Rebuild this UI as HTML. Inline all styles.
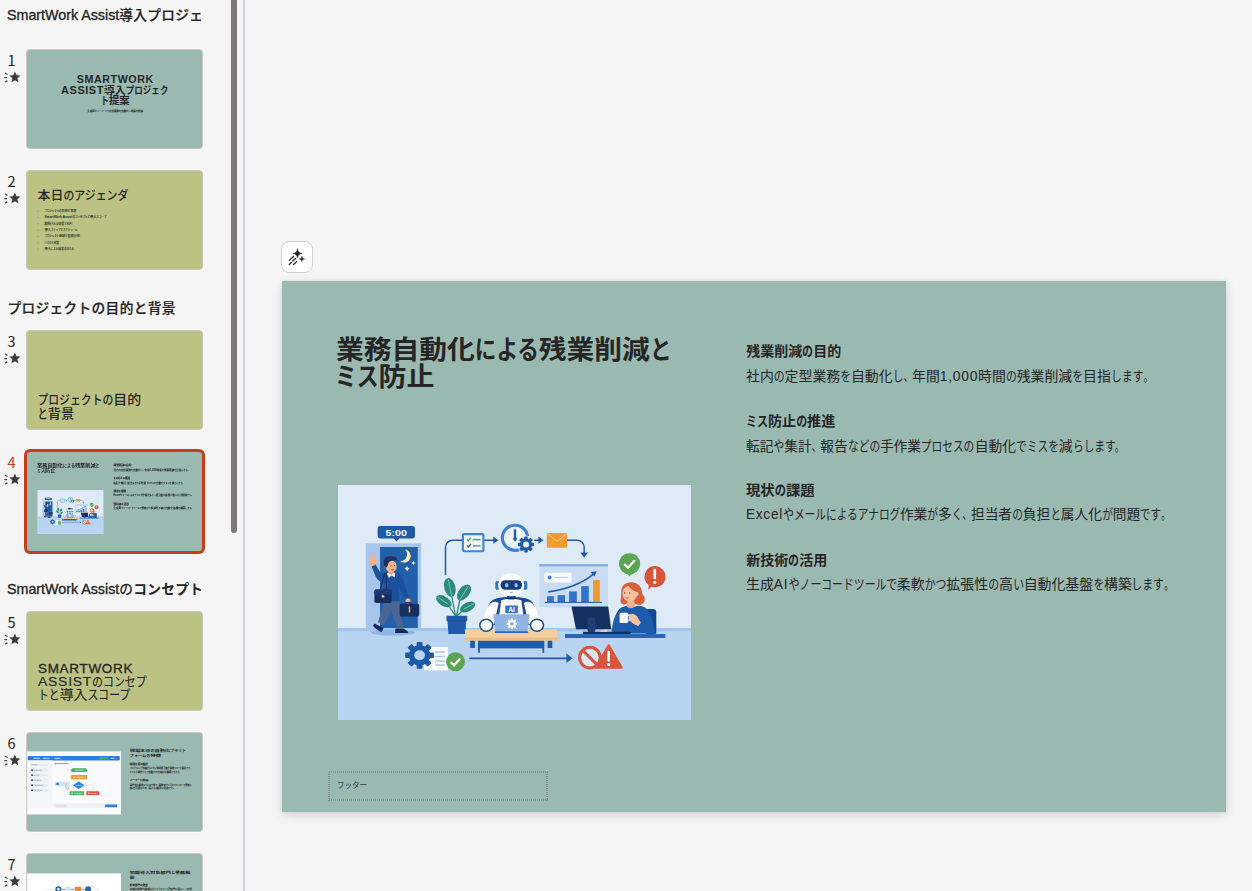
<!DOCTYPE html>
<html lang="ja"><head><meta charset="utf-8"><title>SmartWork Assist</title>
<style>
html,body{margin:0;padding:0;background:#f5f5f5}
body{width:1252px;height:891px;overflow:hidden;background:#f5f5f5;position:relative;
 font-family:"Liberation Sans","Noto Sans CJK JP",sans-serif;color:#262626}
#panel{position:absolute;left:0;top:0;width:243px;height:891px;overflow:hidden}
#sbar{position:absolute;left:231px;top:-2px;width:6px;height:535px;border-radius:3px;background:#7a7977}
#divider{position:absolute;left:243px;top:0;width:2px;height:891px;background:#d1d5d9}
.shead{position:absolute;left:7.500px;height:20px;line-height:20px;font-size:13.700px;font-weight:500;-webkit-text-stroke:.22px #242424;white-space:nowrap;color:#242424;
 font-family:"Noto Sans CJK JP",sans-serif;letter-spacing:.33px}
.shead .lat{font-family:"Liberation Sans",sans-serif;font-weight:400;font-size:14.300px;-webkit-text-stroke:.33px #242424;letter-spacing:-.02px;margin-left:-.5px}
.tnum{position:absolute;left:2px;width:19px;text-align:center;font-size:14.500px;line-height:20px;color:#242424;font-family:"Noto Sans CJK JP",sans-serif}
.tnum.cur{color:#c43e1c}
.tstar{position:absolute;left:4px}
.thumb{position:absolute;left:26px;width:177px;height:100px;border-radius:4px;overflow:hidden;box-sizing:border-box;border:1px solid rgba(205,200,195,.95);box-shadow:0 0 0 1px rgba(255,255,255,.4)}
.thumb.sel{box-shadow:none;border:3px solid #c43e1c;left:24px;width:181px;height:105px;margin-top:-2px;border-radius:6px}
.thumb .tin{position:absolute;left:-.5px;top:-.5px;width:944px;height:531px;transform:scale(0.18644);transform-origin:0 0}
#btn{position:absolute;left:281px;top:241px;width:32px;height:32px;box-sizing:border-box;border:1px solid #cfcfcf;border-radius:8px;background:#fff}
#btn svg{position:absolute;left:-1px;top:-1px}
#slide{position:absolute;left:282px;top:281px;width:944px;height:531px;background:#99b9b1;
 box-shadow:0 3px 10px rgba(0,0,0,.14),0 0 3px rgba(0,0,0,.07)}
.sl{position:absolute;left:0;top:0;width:944px;height:531px;overflow:hidden}
/* slide typography (Meiryo UI look: condensed kana) */
.kn{display:inline-block;transform:scaleX(.78);transform-origin:0 50%;white-space:nowrap}
.mj{font-family:"Liberation Sans","Noto Sans CJK JP",sans-serif;white-space:nowrap;position:absolute;color:#262626}
.illus{position:absolute;display:block}
.ftr{position:absolute;left:46px;top:490px;width:220px;height:30px;box-sizing:border-box;background:
 repeating-linear-gradient(90deg,transparent 0 1px,#86918e 1px 2px) 0 0/100% 2px no-repeat,
 repeating-linear-gradient(90deg,transparent 0 1px,#86918e 1px 2px) 0 100%/100% 2px no-repeat,
 repeating-linear-gradient(180deg,#86918e 0 1px,transparent 1px 2px) 0 1px/2px 100% no-repeat,
 repeating-linear-gradient(180deg,#86918e 0 1px,transparent 1px 2px) 100% 1px/2px 100% no-repeat}
.thumb .sm{-webkit-text-stroke:.5px currentColor}
.la{letter-spacing:.05em}
</style></head>
<body>
<div id="panel">
<div class="shead" style="top:4px"><span class="lat">SmartWork Assist</span>導入プロジェ</div>
<div class="tnum" style="top:50px">1</div><svg class="tstar" style="top:71.2px" width="18" height="13" viewBox="0 0 18 13"><path transform="translate(.9 0) scale(.94 1)" d="M10.600 .4l1.700 3.800 4.100.4-3.100 2.700.9 4-3.600-2.100-3.600 2.100.9-4-3.100-2.700 4.100-.4z" fill="#3a3a3a"/><path d="M.8 2l2.700 1.400M.4 6.600h2.700M.8 11.300l2.700-1.500" stroke="#3a3a3a" stroke-width="1.100" fill="none"/></svg><div class="thumb" style="top:49px;background:#99b9b1"><div class="tin"><div class="mj fit" style="left:266.60px;top:123.55px;font-size:57.00px;line-height:68.40px;font-weight:700;transform:scaleX(1.0116);transform-origin:0 0;"><span class="la">SMARTWORK</span></div>
<div class="mj fit" style="left:183.40px;top:180.25px;font-size:57.00px;line-height:68.40px;font-weight:700;transform:scaleX(1.0291);transform-origin:0 0;"><span class="la">ASSIST</span>導入<span class="kn" style="margin-right:-1.100em">プロジェク</span></div>
<div class="mj fit" style="left:396.40px;top:236.95px;font-size:57.00px;line-height:68.40px;font-weight:700;transform:scaleX(0.9781);transform-origin:0 0;"><span class="kn" style="margin-right:-0.220em">ト</span>提案</div>
<div class="mj fit sm" style="left:323.40px;top:317.75px;font-size:14.00px;line-height:16.80px;font-weight:400;transform:scaleX(0.9776);transform-origin:0 0;">生成<span class="la">AI</span><span class="kn" style="margin-right:-1.540em">とノーコードで</span>定型業務<span class="kn" style="margin-right:-0.220em">を</span>自動化<span class="kn" style="margin-right:-0.220em">し</span>残業<span class="kn" style="margin-right:-0.220em">を</span>削減</div></div></div>
<div class="tnum" style="top:171px">2</div><svg class="tstar" style="top:192.2px" width="18" height="13" viewBox="0 0 18 13"><path transform="translate(.9 0) scale(.94 1)" d="M10.600 .4l1.700 3.800 4.100.4-3.100 2.700.9 4-3.600-2.100-3.600 2.100.9-4-3.100-2.700 4.100-.4z" fill="#3a3a3a"/><path d="M.8 2l2.700 1.400M.4 6.600h2.700M.8 11.300l2.700-1.500" stroke="#3a3a3a" stroke-width="1.100" fill="none"/></svg><div class="thumb" style="top:170px;background:#bbc283"><div class="tin"><div class="mj fit" style="left:55.50px;top:91.98px;font-size:67.00px;line-height:80.40px;font-weight:500;transform:scaleX(1.0383);transform-origin:0 0;">本日<span class="kn" style="transform:scaleX(0.840);margin-right:-0.960em">のアジェンダ</span></div>
<div style="position:absolute;left:57px;top:212.5px;width:4px;height:4px;border-radius:2px;background:#444"></div>
<div class="mj fit sm" style="left:93.90px;top:204.86px;font-size:16.00px;line-height:19.20px;font-weight:400;transform:scaleX(1.0432);transform-origin:0 0;"><span class="kn" style="margin-right:-1.540em">プロジェクトの</span>目的<span class="kn" style="margin-right:-0.220em">と</span>背景</div>
<div style="position:absolute;left:57px;top:246.6px;width:4px;height:4px;border-radius:2px;background:#444"></div>
<div class="mj fit sm" style="left:93.90px;top:238.96px;font-size:16.00px;line-height:19.20px;font-weight:400;transform:scaleX(1.0777);transform-origin:0 0;"><span class="la">SmartWork Assist</span><span class="kn" style="margin-right:-1.540em">のコンセプトと</span>導入<span class="kn" style="margin-right:-0.880em">スコープ</span></div>
<div style="position:absolute;left:57px;top:280.7px;width:4px;height:4px;border-radius:2px;background:#444"></div>
<div class="mj fit sm" style="left:93.90px;top:273.06px;font-size:16.00px;line-height:19.20px;font-weight:400;transform:scaleX(1.0520);transform-origin:0 0;">期待<span class="kn" style="margin-right:-0.660em">される</span>効果<span class="kn" style="margin-right:-0.220em">と</span><span class="la">KPI</span></div>
<div style="position:absolute;left:57px;top:314.8px;width:4px;height:4px;border-radius:2px;background:#444"></div>
<div class="mj fit sm" style="left:93.90px;top:307.16px;font-size:16.00px;line-height:19.20px;font-weight:400;transform:scaleX(1.0488);transform-origin:0 0;">導入<span class="kn" style="margin-right:-2.420em">ステップとスケジュール</span></div>
<div style="position:absolute;left:57px;top:348.9px;width:4px;height:4px;border-radius:2px;background:#444"></div>
<div class="mj fit sm" style="left:93.90px;top:341.26px;font-size:16.00px;line-height:19.20px;font-weight:400;transform:scaleX(1.0380);transform-origin:0 0;"><span class="kn" style="margin-right:-1.320em">プロジェクト</span>体制<span class="kn" style="margin-right:-0.220em">と</span>役割分担</div>
<div style="position:absolute;left:57px;top:383.0px;width:4px;height:4px;border-radius:2px;background:#444"></div>
<div class="mj fit sm" style="left:93.90px;top:375.36px;font-size:16.00px;line-height:19.20px;font-weight:400;transform:scaleX(0.9615);transform-origin:0 0;"><span class="kn" style="margin-right:-0.880em">リスクと</span>対策</div>
<div style="position:absolute;left:57px;top:417.1px;width:4px;height:4px;border-radius:2px;background:#444"></div>
<div class="mj fit sm" style="left:93.90px;top:409.46px;font-size:16.00px;line-height:19.20px;font-weight:400;transform:scaleX(1.0447);transform-origin:0 0;">導入<span class="kn" style="margin-right:-0.660em">による</span>成果<span class="kn" style="margin-right:-0.880em">のまとめ</span></div></div></div>
<div class="shead" style="top:297px">プロジェクトの目的と背景</div>
<div class="tnum" style="top:331px">3</div><svg class="tstar" style="top:352.2px" width="18" height="13" viewBox="0 0 18 13"><path transform="translate(.9 0) scale(.94 1)" d="M10.600 .4l1.700 3.800 4.100.4-3.100 2.700.9 4-3.600-2.100-3.600 2.100.9-4-3.100-2.700 4.100-.4z" fill="#3a3a3a"/><path d="M.8 2l2.700 1.400M.4 6.600h2.700M.8 11.300l2.700-1.500" stroke="#3a3a3a" stroke-width="1.100" fill="none"/></svg><div class="thumb" style="top:330px;background:#bbc283"><div class="tin"><div class="mj fit" style="left:56.30px;top:330.19px;font-size:69.00px;line-height:82.80px;font-weight:500;transform:scaleX(1.0801);transform-origin:0 0;"><span class="kn" style="margin-right:-1.540em">プロジェクトの</span>目的</div>
<div class="mj fit" style="left:56.30px;top:402.19px;font-size:69.00px;line-height:82.80px;font-weight:500;transform:scaleX(1.0322);transform-origin:0 0;"><span class="kn" style="margin-right:-0.220em">と</span>背景</div></div></div>
<div class="tnum cur" style="top:452px">4</div><svg class="tstar" style="top:473.2px" width="18" height="13" viewBox="0 0 18 13"><path transform="translate(.9 0) scale(.94 1)" d="M10.600 .4l1.700 3.800 4.100.4-3.100 2.700.9 4-3.600-2.100-3.600 2.100.9-4-3.100-2.700 4.100-.4z" fill="#3a3a3a"/><path d="M.8 2l2.700 1.400M.4 6.600h2.700M.8 11.300l2.700-1.500" stroke="#3a3a3a" stroke-width="1.100" fill="none"/></svg><div class="thumb sel" style="top:451px;background:#99b9b1"><div class="tin"><div class="mj fit" style="left:54.00px;top:53.58px;font-size:25.80px;line-height:30.96px;font-weight:700;transform:scaleX(1.0755);transform-origin:0 0;">業務自動化<span class="kn" style="margin-right:-0.660em">による</span>残業削減<span class="kn" style="margin-right:-0.220em">と</span></div>
<div class="mj fit" style="left:53.20px;top:80.68px;font-size:25.80px;line-height:30.96px;font-weight:700;transform:scaleX(1.0830);transform-origin:0 0;"><span class="kn" style="margin-right:-0.440em">ミス</span>防止</div>
<svg class="illus" style="left:56px;top:204px" viewBox="0 0 353 235" width="353" height="235">
<rect width="353" height="235" fill="#deeaf6"/>
<rect y="143" width="353" height="92" fill="#b8d4f0"/>
<rect y="143" width="353" height="3.2" fill="#a3c4eb"/>
<!-- door -->
<rect x="27.8" y="58.3" width="55.2" height="84.7" fill="#a7c6ec"/>
<rect x="42" y="62" width="37.8" height="81" fill="#2160ab"/>
<ellipse cx="55" cy="147.6" rx="22" ry="3" fill="#8fb5e6"/>
<!-- 5:00 badge -->
<path d="M42.6 41h31.4a3 3 0 0 1 3 3v6.6a3 3 0 0 1-3 3h-12.7l-2.8 3-2.8-3h-13.100a3 3 0 0 1-3-3v-6.600a3 3 0 0 1 3-3z" fill="#1c5aa6"/>
<text x="47.600" y="50.600" font-family="Liberation Sans, sans-serif" font-weight="700" font-size="8.800" fill="#fff" textLength="21.400" lengthAdjust="spacingAndGlyphs">5:00</text>
<!-- moon and stars -->
<path d="M67 64.600a6.500 6.500 0 1 1-5 11.400a6.600 6.600 0 0 0 5-11.400z" fill="#fbe8b4"/>
<path d="M75.400 75.900l.7 1.400 1.400.7-1.400.7-.7 1.400-.7-1.400-1.400-.7 1.400-.7z" fill="#fbe8b4"/>
<path d="M69.100 81l.9 1.800 1.800.9-1.800.9-.9 1.800-.9-1.800-1.800-.9 1.800-.9z" fill="#fbe8b4"/>
<!-- man -->
<path d="M47 115l14-1 4 28-6 .5-6-17-7 15-6-3.500z" fill="#4a6692"/>
<path d="M36.500 138.500l9 4.500-1.800 4.200c-3-1.200-6.700-3.700-8.700-6.500z" fill="#132a57"/>
<path d="M57.500 143.500h7.500c2.500 1 4.500 2.500 5.600 4.500h-13.600z" fill="#132a57"/>
<path d="M33.200 80.500l4.300-1.300 5.300 9.500 7.200-1.500 10 .6c3.500 2.200 5.600 8 7.400 14.200l4.300 11.500-3.800 1.700-6.800-11.500.4 12.300-15.500.8-.5-19.300c-3.300-.8-6.300-2.600-7.600-5.500z" fill="#1b509d"/>
<path d="M48.700 88.200l3.800-1.500 4.800 1.300-.6 4.400-3.100-2-2.600 2.700z" fill="#f4f7fb"/>
<path d="M50.800 84h4.600v4.300l-2.300 1.700-2.300-1.700z" fill="#eaa57c"/>
<ellipse cx="53.200" cy="81.400" rx="5.500" ry="6" fill="#f3b48a"/>
<circle cx="47.700" cy="81.600" r="1.300" fill="#eaa57c"/>
<path d="M45.700 79.300c-1.200-5.800 3.800-9.400 9.600-8 2.800.7 4.500 2.400 4 4.300-3.600-.6-6.900-.1-8.700 1.800-.4 2.200-1.100 4.300-2.600 5.400-1.400-.4-2.100-1.700-2.300-3.500z" fill="#1d3260"/>
<path d="M52.600 84.300c1.100.6 2.500.3 3.400-.8-.1 2.100-2.300 2.800-3.400.8z" fill="#b83a3a"/>
<circle cx="53" cy="80.700" r=".5" fill="#3b2a2a"/><circle cx="56.500" cy="80.300" r=".5" fill="#3b2a2a"/>
<path d="M31 73.500c0-1.500 1.500-2 2.200-.8l.5-1.700c.5-1 2-.9 2.200.2.800-.9 2.200-.3 2 .9l-.6 3.100c1.200-1 2.300 0 1.600 1.200l-2.200 3.900-3.600 1.200c-1.500-2.300-2.100-5.200-2.100-8z" fill="#f3b48a"/>
<path d="M47.500 88l.9-.2.600 17.200-.9.100zM47.300 88l-4.800 17.500-.9-.3 4.800-17.500z" fill="#132a57"/>
<rect x="36.400" y="104.600" width="17.300" height="13.400" rx="1.800" fill="#162f62"/>
<rect x="36.400" y="104.600" width="17.300" height="5" rx="1.800" fill="#1d3a74"/>
<rect x="43.700" y="110.300" width="2.600" height="2.300" rx=".5" fill="#f3d489"/>
<circle cx="70" cy="115.800" r="2.500" fill="#f3b48a"/>
<path d="M66.800 119c0-3 6.500-3 6.500 0h-1.200c0-1.600-4.100-1.600-4.100 0z" fill="#162f62"/>
<rect x="61.600" y="118.800" width="19.600" height="12.600" rx="1.600" fill="#1b2f5e"/>
<rect x="70.700" y="121.300" width="1.500" height="6.200" rx=".5" fill="#d7b77c"/>
<!-- flow line + checklist -->
<g fill="none" stroke="#1f5ba8" stroke-width="1.500" stroke-linecap="round">
<path d="M107.500 89.500v-27a7.300 7.300 0 0 1 7.300-7.300h9"/>
<path d="M146.500 55.200h9.500M196.800 55.200h4M229.500 55.200h9.500a7.200 7.200 0 0 1 7.200 7.200v5.500"/>
</g>
<path d="M155.300 51.600l5.200 3.600-5.200 3.600zM200.300 51.600l5.200 3.600-5.200 3.600zM242.400 67.400h7.600l-3.800 5.300z" fill="#1f5ba8"/>
<rect x="124.900" y="49.100" width="20.500" height="17.200" rx="1.200" fill="#eff5fc" stroke="#3f82d8" stroke-width="2.100"/>
<path d="M129 54.300l1.400 1.500 2.500-3" fill="none" stroke="#4ea349" stroke-width="1.300"/>
<path d="M129 60.500l1.400 1.500 2.500-3" fill="none" stroke="#1f5ba8" stroke-width="1.300"/>
<path d="M135 54.600h7.500M135 60.800h7.500" stroke="#3f82d8" stroke-width="1.300"/>
<!-- clock + gear -->
<circle cx="177" cy="52.800" r="12.600" fill="#edf4fc" stroke="#3b7fd6" stroke-width="3.100"/>
<g stroke="#9db7d8" stroke-width=".8"><path d="M177 43v1.600M177 61v1.600M167.200 52.800h1.600M185.200 52.800h1.600M170.100 45.900l1.100 1.100M183.900 45.900l-1.100 1.100M170.100 59.700l1.100-1.100"/></g>
<path d="M177 45.300v8" stroke="#1f5ba8" stroke-width="2.300" stroke-linecap="round"/>
<circle cx="177" cy="54" r="1.900" fill="#1f5ba8"/>
<g transform="translate(188 59.500)">
<circle r="9" fill="#deeaf6"/>
<g fill="#1f5ba8"><circle r="6"/>
<g><rect x="-1.700" y="-8" width="3.400" height="16" rx=".6"/><rect x="-1.700" y="-8" width="3.400" height="16" rx=".6" transform="rotate(45)"/><rect x="-1.700" y="-8" width="3.400" height="16" rx=".6" transform="rotate(90)"/><rect x="-1.700" y="-8" width="3.400" height="16" rx=".6" transform="rotate(135)"/></g></g>
<circle r="3" fill="#eaf2fb"/></g>
<!-- envelope -->
<rect x="208.800" y="48.100" width="20.400" height="14.600" rx="1.200" fill="#f39a2d"/>
<path d="M209.200 48.800l9.800 7.600 9.800-7.600" fill="none" stroke="#f8bd73" stroke-width="1.100"/>
<path d="M209.200 62.300l7.300-6.800M228.800 62.300l-7.300-6.800" stroke="#f6ae55" stroke-width=".8"/>
<!-- chart board -->
<rect x="201.300" y="79.100" width="68.700" height="43.200" fill="#c9dcf4"/>
<rect x="201.300" y="79.100" width="68.700" height="2.300" fill="#86afe5"/>
<rect x="206.400" y="87.700" width="27.200" height="9.900" rx="1.300" fill="#f6f9fd"/>
<circle cx="211.600" cy="92.500" r="2" fill="#3f82d8"/>
<path d="M216.300 92.500h14" stroke="#bcd3ee" stroke-width="1.200"/>
<g fill="#2f74c9"><rect x="209" y="111.300" width="6.800" height="5.800"/><rect x="219.600" y="110.200" width="7.400" height="6.900"/><rect x="231.100" y="106.400" width="7.700" height="10.700"/><rect x="243.200" y="101.100" width="7.600" height="16"/></g>
<rect x="255" y="95.100" width="6.800" height="22" fill="#f39a2d"/>
<path d="M207 117.400h57" stroke="#1f5ba8" stroke-width="1"/>
<path d="M210.300 106.900c18-2.500 34-8.500 45.500-18" fill="none" stroke="#1f5ba8" stroke-width="1.600"/>
<path d="M258.800 86.300l-6.300.6 3.900 4.600z" fill="#1f5ba8"/>
<!-- plant -->
<g fill="#2a8a7c">
<ellipse cx="111.800" cy="102.500" rx="5.600" ry="9.600" transform="rotate(-14 111.800 102.500)"/>
<ellipse cx="126" cy="107.500" rx="5.400" ry="9.200" transform="rotate(38 126 107.500)"/>
<ellipse cx="105.800" cy="116.200" rx="4.800" ry="8.600" transform="rotate(-58 105.800 116.200)"/>
<ellipse cx="129.600" cy="122" rx="4.400" ry="8.400" transform="rotate(62 129.600 122)"/>
</g>
<g fill="none" stroke="#2a8a7c" stroke-width="1.300"><path d="M113.500 110l4 21M122 114l-3.500 17M109.500 119l8 12M126 124l-7 7"/></g><g fill="none" stroke="#8fd0c2" stroke-width=".8"><path d="M110.300 94.500l3.400 17M130.500 101l-8.500 13.500M99.800 112.300l10.500 7M136.500 118.300l-11 6"/></g>
<path d="M108.500 130.800h20.700v5.100h-1l-.9 13.100h-16.900l-.9-13.100h-1z" fill="#1f5ba8"/>
<path d="M109.500 135.900h18.700" stroke="#174a8f" stroke-width=".7"/>
<!-- robot -->
<path d="M150.300 121c1.200-4 4.200-6.500 8.700-7.700 4-1 8.800-1.300 14.300-1.300s10.300.3 14.300 1.300c4.500 1.200 7.500 3.700 8.700 7.700l-3 19h-40z" fill="#1a4b95"/>
<path d="M152.300 118.600c2.700-2.200 6.300-2.400 8.400-.6l-4.800 21.500-10.800-2.700c.8-7.200 3.300-13.700 7.200-18.200z" fill="#fbfdff"/>
<path d="M194.300 118.600c-2.700-2.200-6.300-2.400-8.400-.6l4.800 21.500 10.800-2.700c-.8-7.200-3.300-13.700-7.200-18.200z" fill="#fbfdff"/>
<path d="M163.200 115.300c3-.9 6.300-1.300 10.100-1.300s7.100.4 10.100 1.300l3.300 25.200h-26.800z" fill="#fbfdff"/>
<rect x="169" y="110" width="8.600" height="4.600" rx="2" fill="#163a7a"/>
<rect x="157.300" y="96" width="4.400" height="8.800" rx="1.800" fill="#2f74c9"/><rect x="184.900" y="96" width="4.400" height="8.800" rx="1.800" fill="#2f74c9"/>
<rect x="160.200" y="88.800" width="26" height="22.400" rx="10.500" fill="#fbfdff"/>
<rect x="162.600" y="95.200" width="21.400" height="9.600" rx="4.600" fill="#163a7a"/>
<ellipse cx="168.700" cy="100.200" rx="1.600" ry="2.200" fill="#8cc3f5"/><ellipse cx="178.100" cy="100.200" rx="1.600" ry="2.200" fill="#8cc3f5"/>
<path d="M171.600 106.900c1 .9 2.400.9 3.400 0" fill="none" stroke="#5a6f8f" stroke-width=".6"/>
<rect x="167.300" y="120.400" width="12.500" height="7.800" rx=".8" fill="#2f74c9"/>
<text x="173.550" y="127" font-family="Liberation Sans, sans-serif" font-weight="700" font-size="6.800" fill="#fff" text-anchor="middle">AI</text>
<!-- desk -->
<rect x="132.200" y="155" width="4.700" height="8" fill="#1f5ba8"/><rect x="209.600" y="155" width="4.700" height="8" fill="#1f5ba8"/>
<rect x="140.100" y="155" width="66.100" height="8.400" fill="#1f5ba8"/>
<rect x="140.100" y="155" width="1.800" height="12.800" fill="#1f5ba8"/><rect x="204.400" y="155" width="1.800" height="12.800" fill="#1f5ba8"/>
<rect x="127" y="144.300" width="92" height="11.200" rx="1" fill="#f3d09c"/>
<rect x="127" y="152.500" width="92" height="3" rx="1" fill="#e9bf85"/>
<ellipse cx="148.300" cy="140.200" rx="6.500" ry="6" fill="#fbfdff" stroke="#1a4b95" stroke-width="1.500"/>
<ellipse cx="199" cy="140.200" rx="6.500" ry="6" fill="#fbfdff" stroke="#1a4b95" stroke-width="1.500"/>
<!-- laptop -->
<path d="M155.300 129.300h36.300l-2.200 17.200h-31.900z" fill="#8fb3e2"/>
<rect x="156.800" y="146.200" width="33.400" height="1.900" rx=".6" fill="#2f66b3"/>
<g transform="translate(173.900 138.800)" fill="#fbfdff"><circle r="3.800"/><rect x="-1.100" y="-5.200" width="2.200" height="10.400" rx=".4"/><rect x="-1.100" y="-5.200" width="2.200" height="10.400" rx=".4" transform="rotate(45)"/><rect x="-1.100" y="-5.200" width="2.200" height="10.400" rx=".4" transform="rotate(90)"/><rect x="-1.100" y="-5.200" width="2.200" height="10.400" rx=".4" transform="rotate(135)"/><circle r="1.900" fill="#8fb3e2"/></g>
<!-- chair, woman -->
<rect x="307.300" y="123.900" width="11" height="26" rx="3.300" fill="#114a93"/>
<path d="M273.700 148.500c.4-9.500 3-19 7.300-24.300 2.300-2.300 5.800-3.200 10-3.500l4.500 1.300 4.500-1.300c4.200.3 7 1.200 9 3.500 4.300 5.300 7 14.800 7.600 24.300z" fill="#1d5cac"/>
<path d="M283.200 106.500c0-5.800 4.500-9.500 10.300-9.300 6 .2 10 4 10.300 9.300.1 2.500 1.700 3.500 2.600 5.600 1.300 3.200-.6 7.300-4.400 7.700-2.600.2-4.800-.4-6.300-1.700h-5.800c-1.600 1.300-3.500 1.800-5.300 1.200-2.100-.8-2.600-3.200-1.800-5.400.6-2 .4-4.700.4-7.400z" fill="#d95f38"/>
<path d="M289.400 115.500h6.800l.8 5.700c-2.400 2.600-6 2.600-8.400 0z" fill="#f0b089"/>
<path d="M284.500 108.500c.1-4.200 2.800-7.200 6.200-7.500 1.600 3 4.700 5.200 8.300 6 .9.100 1.600.9 1.600 2 0 1.200-.8 2.100-1.900 2.100-.9 3.300-3.600 5.500-7 5.500-4.200 0-7.300-3.500-7.200-8.100z" fill="#f6c19c"/>
<path d="M287.300 112.200c1.100.7 2.500.6 3.500-.2-.4 1.700-2.700 2-3.500.2z" fill="#c0342b"/>
<ellipse cx="286.800" cy="107.900" rx=".55" ry=".8" fill="#4a3a34"/><ellipse cx="291.700" cy="108" rx=".55" ry=".8" fill="#4a3a34"/>
<rect x="281.600" y="127.800" width="8.600" height="10.200" rx="1.300" fill="#fbfdff"/>
<path d="M290 130.200h1.900v5.200h-1.900" fill="none" stroke="#fbfdff" stroke-width="1.300"/>
<path d="M291.600 129.400c2.300-1.400 5.300-.6 7.300 1.800l4 6.500-2.600 3.200c-3.300-.9-7-2.800-8.700-5.800z" fill="#f6c19c"/>
<!-- monitor -->
<path d="M233.500 121.500h36.700l3 22.800h-35.200z" fill="#14315f"/>
<rect x="249.500" y="132.500" width="7.900" height="15" rx="3" fill="#223f75"/>
<rect x="244.800" y="146.700" width="48" height="2.400" rx="1" fill="#14315f"/>
<path d="M262 146.900c1.800-2.300 5.300-3 7.800-1.800l-.8 2z" fill="#f6c19c"/>
<rect x="227" y="149" width="100.300" height="4" fill="#2b66b5"/>
<!-- bubbles -->
<circle cx="291.600" cy="78.800" r="10.600" fill="#5aa552"/><path d="M289.200 88.600h4.800l-2.400 3z" fill="#5aa552"/>
<path d="M286.300 79l3.700 3.700 6.800-7.400" fill="none" stroke="#fff" stroke-width="2.300"/>
<path d="M316.800 81.100a10.600 10.600 0 1 1-3.400 20.600l-3 3 .3-4.600a10.600 10.600 0 0 1 6.100-19z" fill="#d9553a"/>
<path d="M316.800 85v8" stroke="#fff" stroke-width="2.600" stroke-linecap="round"/><circle cx="316.800" cy="97.300" r="1.600" fill="#fff"/>
<!-- bottom row -->
<rect x="86.200" y="162" width="23.900" height="23.300" fill="#fbfdff"/>
<path d="M97.300 167h9.600M97.300 171.600h9.600M97.300 176.100h9.600M97.300 180.100h9.600" stroke="#a6c6ec" stroke-width="1.500"/>
<g transform="translate(81.600 170.300) scale(1 .93)" fill="#1c5aa6"><circle r="10.800"/><rect x="-2.900" y="-14.400" width="5.800" height="28.800" rx="1"/><rect x="-2.900" y="-14.400" width="5.800" height="28.800" rx="1" transform="rotate(45)"/><rect x="-2.900" y="-14.400" width="5.800" height="28.800" rx="1" transform="rotate(90)"/><rect x="-2.900" y="-14.400" width="5.800" height="28.800" rx="1" transform="rotate(135)"/><circle r="5.400" fill="#b8d4f0"/></g>
<circle cx="117.500" cy="176.800" r="9.500" fill="#5aa552"/>
<path d="M112.600 177l3.400 3.400 6.200-6.800" fill="none" stroke="#fff" stroke-width="2.200"/>
<path d="M131.400 173.300h98" stroke="#1f5ba8" stroke-width="1.800"/>
<path d="M228.400 168.600l6.200 4.700-6.200 4.700z" fill="#1f5ba8"/>
<path d="M270.700 160.300l13 22.300h-26z" fill="#d9553a" stroke="#d9553a" stroke-width="2.200" stroke-linejoin="round"/>
<path d="M270.700 167v8.500" stroke="#fff" stroke-width="2.600" stroke-linecap="round"/><circle cx="270.700" cy="179.600" r="1.500" fill="#fff"/>
<circle cx="251.900" cy="172.600" r="10.300" fill="#dbe6f5" stroke="#d9553a" stroke-width="3"/>
<path d="M244.600 165.300l14.600 14.600" stroke="#d9553a" stroke-width="3"/>
</svg>

<div class="mj fit sm" style="left:464.30px;top:61.95px;font-size:14.00px;line-height:16.80px;font-weight:700;">残業削減<span class="kn" style="margin-right:-0.220em">の</span>目的</div>
<div class="mj fit sm" style="left:464.30px;top:86.95px;font-size:14.00px;line-height:16.80px;font-weight:400;transform:scaleX(0.9919);transform-origin:0 0;">社内<span class="kn" style="margin-right:-0.220em">の</span>定型業務<span class="kn" style="margin-right:-0.220em">を</span>自動化<span class="kn" style="margin-right:-0.220em">し</span><span class="kn" style="transform:scaleX(0.620);margin-right:-0.380em">、</span>年間<span class="la">1,000</span>時間<span class="kn" style="margin-right:-0.220em">の</span>残業削減<span class="kn" style="margin-right:-0.220em">を</span>目指<span class="kn" style="margin-right:-0.660em">します</span><span class="kn" style="transform:scaleX(0.620);margin-right:-0.380em">。</span></div>
<div class="mj fit sm" style="left:464.30px;top:131.55px;font-size:14.00px;line-height:16.80px;font-weight:700;transform:scaleX(1.0049);transform-origin:0 0;"><span class="kn" style="margin-right:-0.440em">ミス</span>防止<span class="kn" style="margin-right:-0.220em">の</span>推進</div>
<div class="mj fit sm" style="left:464.30px;top:156.55px;font-size:14.00px;line-height:16.80px;font-weight:400;transform:scaleX(0.9817);transform-origin:0 0;">転記<span class="kn" style="margin-right:-0.220em">や</span>集計<span class="kn" style="transform:scaleX(0.620);margin-right:-0.380em">、</span>報告<span class="kn" style="margin-right:-0.660em">などの</span>手作業<span class="kn" style="margin-right:-1.100em">プロセスの</span>自動化<span class="kn" style="margin-right:-0.880em">でミスを</span>減<span class="kn" style="margin-right:-0.880em">らします</span><span class="kn" style="transform:scaleX(0.620);margin-right:-0.380em">。</span></div>
<div class="mj fit sm" style="left:464.30px;top:200.55px;font-size:14.00px;line-height:16.80px;font-weight:700;transform:scaleX(1.0251);transform-origin:0 0;">現状<span class="kn" style="margin-right:-0.220em">の</span>課題</div>
<div class="mj fit sm" style="left:464.30px;top:225.35px;font-size:14.00px;line-height:16.80px;font-weight:400;transform:scaleX(0.9792);transform-origin:0 0;"><span class="la">Excel</span><span class="kn" style="margin-right:-2.420em">やメールによるアナログ</span>作業<span class="kn" style="margin-right:-0.220em">が</span>多<span class="kn" style="margin-right:-0.220em">く</span><span class="kn" style="transform:scaleX(0.620);margin-right:-0.380em">、</span>担当者<span class="kn" style="margin-right:-0.220em">の</span>負担<span class="kn" style="margin-right:-0.220em">と</span>属人化<span class="kn" style="margin-right:-0.220em">が</span>問題<span class="kn" style="margin-right:-0.440em">です</span><span class="kn" style="transform:scaleX(0.620);margin-right:-0.380em">。</span></div>
<div class="mj fit sm" style="left:464.30px;top:270.55px;font-size:14.00px;line-height:16.80px;font-weight:700;">新技術<span class="kn" style="margin-right:-0.220em">の</span>活用</div>
<div class="mj fit sm" style="left:464.30px;top:295.15px;font-size:14.00px;line-height:16.80px;font-weight:400;transform:scaleX(0.9932);transform-origin:0 0;">生成<span class="la">AI</span><span class="kn" style="margin-right:-2.200em">やノーコードツールで</span>柔軟<span class="kn" style="margin-right:-0.440em">かつ</span>拡張性<span class="kn" style="margin-right:-0.220em">の</span>高<span class="kn" style="margin-right:-0.220em">い</span>自動化基盤<span class="kn" style="margin-right:-0.220em">を</span>構築<span class="kn" style="margin-right:-0.660em">します</span><span class="kn" style="transform:scaleX(0.620);margin-right:-0.380em">。</span></div></div></div>
<div class="shead" style="top:578px"><span class="lat">SmartWork Assist</span><span style="-webkit-text-stroke:0">の</span><span style="font-weight:700;-webkit-text-stroke:0">コンセプト</span></div>
<div class="tnum" style="top:612px">5</div><svg class="tstar" style="top:633.2px" width="18" height="13" viewBox="0 0 18 13"><path transform="translate(.9 0) scale(.94 1)" d="M10.600 .4l1.700 3.800 4.100.4-3.100 2.700.9 4-3.600-2.100-3.600 2.100.9-4-3.100-2.700 4.100-.4z" fill="#3a3a3a"/><path d="M.8 2l2.700 1.400M.4 6.600h2.700M.8 11.300l2.700-1.500" stroke="#3a3a3a" stroke-width="1.100" fill="none"/></svg><div class="thumb" style="top:611px;background:#bbc283"><div class="tin"><div class="mj fit" style="left:59.00px;top:264.64px;font-size:68.00px;line-height:81.60px;font-weight:400;transform:scaleX(1.0649);transform-origin:0 0;-webkit-text-stroke:1.6px #262626;"><span class="la">SMARTWORK</span></div>
<div class="mj fit" style="left:59.00px;top:334.64px;font-size:68.00px;line-height:81.60px;font-weight:400;transform:scaleX(1.1064);transform-origin:0 0;-webkit-text-stroke:.8px #262626;"><span class="la">ASSIST</span><span class="kn" style="margin-right:-1.100em">のコンセプ</span></div>
<div class="mj fit" style="left:59.00px;top:401.64px;font-size:68.00px;line-height:81.60px;font-weight:400;transform:scaleX(1.0972);transform-origin:0 0;-webkit-text-stroke:.8px #262626;"><span class="kn" style="margin-right:-0.440em">トと</span>導入<span class="kn" style="margin-right:-0.880em">スコープ</span></div></div></div>
<div class="tnum" style="top:733px">6</div><svg class="tstar" style="top:754.2px" width="18" height="13" viewBox="0 0 18 13"><path transform="translate(.9 0) scale(.94 1)" d="M10.600 .4l1.700 3.800 4.100.4-3.100 2.700.9 4-3.600-2.100-3.600 2.100.9-4-3.100-2.700 4.100-.4z" fill="#3a3a3a"/><path d="M.8 2l2.700 1.400M.4 6.600h2.700M.8 11.300l2.700-1.500" stroke="#3a3a3a" stroke-width="1.100" fill="none"/></svg><div class="thumb" style="top:732px;background:#99b9b1"><div class="tin"><svg class="illus" style="left:0;top:98px" width="505" height="340" viewBox="0 0 93.600 63.200">
<rect width="93.600" height="63.200" fill="#fafbfd"/>
<rect x=".6" y="4.600" width="91.800" height="4.500" rx="1" fill="#2f7de1"/>
<rect x="71.900" y="5.800" width="8.800" height="2.300" rx=".6" fill="#3cb55e"/>
<g fill="#cfe2fa"><rect x="5.900" y="6.500" width="6.800" height=".9"/><rect x="15.800" y="6.500" width="6.800" height=".9"/><rect x="27.100" y="6.500" width="6" height=".9"/><rect x="83.500" y="6.500" width="3.500" height=".9"/></g>
<rect x=".6" y="9.100" width="24.600" height="47.500" fill="#f4f6f9"/>
<g fill="#e6ebf2"><rect x="2.900" y="12.200" width="18.200" height="2.700"/><rect x="2.900" y="17.500" width="18.200" height="2.700"/><rect x="2.900" y="22.500" width="18.200" height="2.700"/><rect x="2.900" y="27.500" width="18.200" height="2.700"/><rect x="2.900" y="32.500" width="18.200" height="2.700"/><rect x="2.900" y="37.500" width="18.200" height="2.700"/></g>
<g fill="#2c4a78"><rect x="4" y="18.100" width="2" height="1.500"/><rect x="4" y="23.100" width="2" height="1.500"/><rect x="4" y="28.100" width="2" height="1.500"/><rect x="4" y="33.100" width="2" height="1.500"/><rect x="4" y="38.100" width="2" height="1.500"/></g>
<g fill="#9aa7b8"><rect x="7" y="18.500" width="8" height=".7"/><rect x="7" y="23.500" width="5" height=".7"/><rect x="7" y="28.500" width="7" height=".7"/><rect x="7" y="33.500" width="9" height=".7"/><rect x="7" y="38.500" width="8" height=".7"/><rect x="4" y="13.200" width="6" height=".7"/></g>
<rect x="27.200" y="11.800" width="14" height=".9" fill="#8794a6"/>
<rect x="27.200" y="14.300" width="62" height=".3" fill="#dfe4ea"/>
<g stroke="#b7c0cc" stroke-width=".35" fill="none"><path d="M51.800 20.700v3M51.800 27.800v2.300M41.600 33.900h4M57.200 33.900h8.300v6M51.400 37.700v2.200"/></g>
<rect x="43.800" y="16.900" width="16" height="3.800" rx="1.900" fill="#3cb55e"/>
<rect x="43.800" y="23.700" width="16" height="4.100" rx=".6" fill="#f0962e"/>
<path d="M51.400 30.100l5.800 3.800-5.800 3.800-5.800-3.800z" fill="#2f7de1"/>
<rect x="27.900" y="30.400" width="13.700" height="4.200" rx=".5" fill="#cfe3fa"/>
<rect x="29" y="31.300" width="2.600" height="2.400" rx=".4" fill="#2f7de1"/>
<rect x="42.300" y="39.900" width="14.400" height="3.800" rx=".6" fill="#3cb55e"/>
<rect x="59" y="39.900" width="12.900" height="3.800" rx=".6" fill="#e5484d"/>
<g fill="#fff" opacity=".85"><rect x="47.500" y="18.500" width="9" height=".7"/><rect x="46" y="25.400" width="2" height="1"/><rect x="49" y="25.500" width="8" height=".7"/><rect x="44" y="41.300" width="1.800" height="1.200"/><rect x="47" y="41.500" width="8" height=".7"/><rect x="60.500" y="41.300" width="1.800" height="1.200"/><rect x="63.500" y="41.500" width="6" height=".7"/><rect x="48.500" y="33.600" width="5.800" height=".6"/></g>
<path d="M38.600 33.300l0 4.200 1-.9.800 1.700.7-.3-.8-1.700 1.400-.1z" fill="#fff" stroke="#555" stroke-width=".3"/>
<rect x="25.300" y="52" width="67.100" height="4.600" fill="#eef1f5"/>
<rect x="28.200" y="53.100" width="11.100" height="2.700" rx=".4" fill="#dfe4ea"/>
<rect x="77.700" y="53.100" width="12" height="2.800" rx=".4" fill="#2f7de1"/>
</svg>
<div class="mj fit" style="left:550.50px;top:82.62px;font-size:21.00px;line-height:25.20px;font-weight:700;transform:scaleX(1.3236);transform-origin:0 0;">現場主導<span class="kn" style="margin-right:-0.220em">の</span>自動化<span class="kn" style="margin-right:-0.880em">プラット</span></div>
<div class="mj fit" style="left:550.50px;top:109.62px;font-size:21.00px;line-height:25.20px;font-weight:700;transform:scaleX(1.3627);transform-origin:0 0;"><span class="kn" style="margin-right:-1.100em">フォームの</span>特徴</div>
<div class="mj fit sm" style="left:550.50px;top:157.05px;font-size:14.00px;line-height:16.80px;font-weight:700;transform:scaleX(1.0324);transform-origin:0 0;">現場主導<span class="kn" style="margin-right:-0.220em">の</span>設計</div>
<div class="mj fit sm" style="left:550.50px;top:181.15px;font-size:14.00px;line-height:16.80px;font-weight:400;transform:scaleX(0.8968);transform-origin:0 0;"><span class="kn" style="margin-right:-1.540em">プログラミング</span>知識<span class="kn" style="margin-right:-1.100em">がなくても</span>現場担当者<span class="kn" style="margin-right:-0.220em">が</span>業務<span class="kn" style="margin-right:-0.880em">フローを</span>設計<span class="kn" style="margin-right:-0.440em">でき</span><span class="kn" style="transform:scaleX(0.620);margin-right:-0.380em">、</span></div>
<div class="mj fit sm" style="left:550.50px;top:200.45px;font-size:14.00px;line-height:16.80px;font-weight:400;transform:scaleX(0.9527);transform-origin:0 0;"><span class="kn" style="margin-right:-0.880em">ドラッグ</span>操作<span class="kn" style="margin-right:-0.660em">だけで</span>自動化<span class="kn" style="margin-right:-0.220em">の</span>仕組<span class="kn" style="margin-right:-0.440em">みを</span>構築<span class="kn" style="margin-right:-0.880em">できます</span><span class="kn" style="transform:scaleX(0.620);margin-right:-0.380em">。</span></div>
<div class="mj fit sm" style="left:550.50px;top:243.35px;font-size:14.00px;line-height:16.80px;font-weight:700;transform:scaleX(1.2226);transform-origin:0 0;"><span class="kn" style="margin-right:-1.100em">ノーコード</span>対応</div>
<div class="mj fit sm" style="left:550.50px;top:269.65px;font-size:14.00px;line-height:16.80px;font-weight:400;transform:scaleX(0.9036);transform-origin:0 0;">専門的<span class="kn" style="margin-right:-0.220em">な</span>開発<span class="kn" style="margin-right:-0.880em">スキルは</span>不要<span class="kn" style="margin-right:-0.220em">で</span><span class="kn" style="transform:scaleX(0.620);margin-right:-0.380em">、</span>業務変化<span class="kn" style="margin-right:-0.220em">に</span>合<span class="kn" style="margin-right:-1.540em">わせてフローを</span>柔軟<span class="kn" style="margin-right:-0.220em">に</span></div>
<div class="mj fit sm" style="left:550.50px;top:287.35px;font-size:14.00px;line-height:16.80px;font-weight:400;transform:scaleX(1.0307);transform-origin:0 0;">修正可能<span class="kn" style="margin-right:-0.660em">なため</span><span class="kn" style="transform:scaleX(0.620);margin-right:-0.380em">、</span>導入<span class="kn" style="margin-right:-0.220em">も</span>運用<span class="kn" style="margin-right:-0.220em">も</span>迅速<span class="kn" style="margin-right:-0.440em">です</span><span class="kn" style="transform:scaleX(0.620);margin-right:-0.380em">。</span></div></div></div>
<div class="tnum" style="top:854px">7</div><svg class="tstar" style="top:875.2px" width="18" height="13" viewBox="0 0 18 13"><path transform="translate(.9 0) scale(.94 1)" d="M10.600 .4l1.700 3.800 4.100.4-3.100 2.700.9 4-3.600-2.100-3.600 2.100.9-4-3.100-2.700 4.100-.4z" fill="#3a3a3a"/><path d="M.8 2l2.700 1.400M.4 6.600h2.700M.8 11.300l2.700-1.500" stroke="#3a3a3a" stroke-width="1.100" fill="none"/></svg><div class="thumb" style="top:853px;background:#99b9b1"><div class="tin"><svg class="illus" style="left:0;top:103px" width="505" height="340" viewBox="0 0 93.600 63.200">
<rect width="93.600" height="63.200" fill="#fefefe"/>
<rect x="20.500" y="16.200" width="51" height="30" rx="2.500" fill="none" stroke="#c9d8ee" stroke-width=".5"/>
<circle cx="31.200" cy="16" r="3" fill="#2567b5"/><circle cx="31.200" cy="16" r="1.200" fill="#fefefe"/>
<rect x="39" y="13.500" width="4" height="5" fill="#cfe0f5"/>
<rect x="47.500" y="13.600" width="6.200" height="4.600" fill="#f0862e"/>
<circle cx="60.800" cy="16" r="3" fill="#2567b5"/>
<path d="M34.500 16h4M43.500 16h3.500M54 16h3.500" stroke="#2567b5" stroke-width=".6"/>
</svg>
<div class="mj fit" style="left:550.50px;top:88.12px;font-size:21.00px;line-height:25.20px;font-weight:700;transform:scaleX(1.3137);transform-origin:0 0;">初期導入対象部門<span class="kn" style="margin-right:-0.220em">と</span>業務範</div>
<div class="mj fit" style="left:550.50px;top:115.12px;font-size:21.00px;line-height:25.20px;font-weight:700;transform:scaleX(1.1905);transform-origin:0 0;">囲</div>
<div class="mj fit sm" style="left:550.50px;top:158.25px;font-size:14.00px;line-height:16.80px;font-weight:700;transform:scaleX(1.0219);transform-origin:0 0;">対象部門<span class="kn" style="margin-right:-0.220em">の</span>選定</div>
<div class="mj fit sm" style="left:550.50px;top:182.25px;font-size:14.00px;line-height:16.80px;font-weight:400;transform:scaleX(1.0209);transform-origin:0 0;">初期<span class="kn" style="margin-right:-0.220em">は</span>総務<span class="kn" style="margin-right:-0.220em">や</span>経理<span class="kn" style="margin-right:-1.980em">などバックオフィス</span>3部門<span class="kn" style="margin-right:-0.220em">に</span>導入<span class="kn" style="margin-right:-0.220em">し</span><span class="kn" style="transform:scaleX(0.620);margin-right:-0.380em">、</span>効果</div></div></div>
</div>
<div id="sbar"></div><div id="divider"></div>
<div id="btn"><svg width="32" height="32" viewBox="0 0 32 32"><path d="M16.450 7.700c.45 3 1.500 4.200 4.700 4.700-3.200.5-4.250 1.700-4.700 4.700-.45-3-1.500-4.200-4.700-4.700 3.200-.5 4.250-1.700 4.700-4.700z" fill="#242424" stroke="#242424" stroke-width=".5" stroke-linejoin="round"/><path d="M20.900 15.200c.3 1.800.95 2.450 2.800 2.750-1.850.3-2.500.95-2.800 2.750-.3-1.800-.95-2.450-2.800-2.750 1.850-.3 2.500-.95 2.800-2.750z" fill="#242424" stroke="#242424" stroke-width=".45" stroke-linejoin="round"/><path d="M8.300 19.400l4.100-3.950M11.700 20.100l2.850-2.600M8.300 23.500l2.100-1.950M12.600 23.500l3-2.850" stroke="#242424" stroke-width="1.300" stroke-linecap="round" fill="none"/></svg></div>
<div id="slide"><div class="sl"><div class="mj fit" style="left:54.00px;top:53.58px;font-size:25.80px;line-height:30.96px;font-weight:700;transform:scaleX(1.0755);transform-origin:0 0;">業務自動化<span class="kn" style="margin-right:-0.660em">による</span>残業削減<span class="kn" style="margin-right:-0.220em">と</span></div>
<div class="mj fit" style="left:53.20px;top:80.68px;font-size:25.80px;line-height:30.96px;font-weight:700;transform:scaleX(1.0830);transform-origin:0 0;"><span class="kn" style="margin-right:-0.440em">ミス</span>防止</div>
<svg class="illus" style="left:56px;top:204px" viewBox="0 0 353 235" width="353" height="235">
<rect width="353" height="235" fill="#deeaf6"/>
<rect y="143" width="353" height="92" fill="#b8d4f0"/>
<rect y="143" width="353" height="3.2" fill="#a3c4eb"/>
<!-- door -->
<rect x="27.8" y="58.3" width="55.2" height="84.7" fill="#a7c6ec"/>
<rect x="42" y="62" width="37.8" height="81" fill="#2160ab"/>
<ellipse cx="55" cy="147.6" rx="22" ry="3" fill="#8fb5e6"/>
<!-- 5:00 badge -->
<path d="M42.6 41h31.4a3 3 0 0 1 3 3v6.6a3 3 0 0 1-3 3h-12.7l-2.8 3-2.8-3h-13.100a3 3 0 0 1-3-3v-6.600a3 3 0 0 1 3-3z" fill="#1c5aa6"/>
<text x="47.600" y="50.600" font-family="Liberation Sans, sans-serif" font-weight="700" font-size="8.800" fill="#fff" textLength="21.400" lengthAdjust="spacingAndGlyphs">5:00</text>
<!-- moon and stars -->
<path d="M67 64.600a6.500 6.500 0 1 1-5 11.400a6.600 6.600 0 0 0 5-11.400z" fill="#fbe8b4"/>
<path d="M75.400 75.900l.7 1.400 1.400.7-1.400.7-.7 1.400-.7-1.400-1.400-.7 1.400-.7z" fill="#fbe8b4"/>
<path d="M69.100 81l.9 1.800 1.800.9-1.800.9-.9 1.800-.9-1.800-1.800-.9 1.800-.9z" fill="#fbe8b4"/>
<!-- man -->
<path d="M47 115l14-1 4 28-6 .5-6-17-7 15-6-3.500z" fill="#4a6692"/>
<path d="M36.500 138.500l9 4.500-1.800 4.200c-3-1.200-6.700-3.700-8.700-6.500z" fill="#132a57"/>
<path d="M57.500 143.500h7.500c2.500 1 4.500 2.500 5.600 4.500h-13.600z" fill="#132a57"/>
<path d="M33.200 80.500l4.300-1.300 5.300 9.500 7.200-1.500 10 .6c3.500 2.200 5.600 8 7.400 14.200l4.300 11.500-3.800 1.700-6.800-11.500.4 12.300-15.500.8-.5-19.300c-3.300-.8-6.300-2.600-7.600-5.500z" fill="#1b509d"/>
<path d="M48.700 88.200l3.800-1.500 4.800 1.300-.6 4.400-3.100-2-2.600 2.700z" fill="#f4f7fb"/>
<path d="M50.800 84h4.600v4.300l-2.300 1.700-2.300-1.700z" fill="#eaa57c"/>
<ellipse cx="53.200" cy="81.400" rx="5.500" ry="6" fill="#f3b48a"/>
<circle cx="47.700" cy="81.600" r="1.300" fill="#eaa57c"/>
<path d="M45.700 79.300c-1.200-5.800 3.800-9.400 9.600-8 2.800.7 4.500 2.400 4 4.300-3.600-.6-6.900-.1-8.700 1.800-.4 2.200-1.100 4.300-2.600 5.400-1.400-.4-2.100-1.700-2.300-3.500z" fill="#1d3260"/>
<path d="M52.600 84.300c1.100.6 2.500.3 3.400-.8-.1 2.100-2.300 2.800-3.400.8z" fill="#b83a3a"/>
<circle cx="53" cy="80.700" r=".5" fill="#3b2a2a"/><circle cx="56.500" cy="80.300" r=".5" fill="#3b2a2a"/>
<path d="M31 73.500c0-1.500 1.500-2 2.200-.8l.5-1.700c.5-1 2-.9 2.200.2.800-.9 2.200-.3 2 .9l-.6 3.100c1.200-1 2.300 0 1.600 1.200l-2.200 3.900-3.600 1.200c-1.500-2.300-2.100-5.200-2.100-8z" fill="#f3b48a"/>
<path d="M47.500 88l.9-.2.600 17.200-.9.100zM47.300 88l-4.800 17.500-.9-.3 4.800-17.500z" fill="#132a57"/>
<rect x="36.400" y="104.600" width="17.300" height="13.400" rx="1.800" fill="#162f62"/>
<rect x="36.400" y="104.600" width="17.300" height="5" rx="1.800" fill="#1d3a74"/>
<rect x="43.700" y="110.300" width="2.600" height="2.300" rx=".5" fill="#f3d489"/>
<circle cx="70" cy="115.800" r="2.500" fill="#f3b48a"/>
<path d="M66.800 119c0-3 6.500-3 6.500 0h-1.200c0-1.600-4.100-1.600-4.100 0z" fill="#162f62"/>
<rect x="61.600" y="118.800" width="19.600" height="12.600" rx="1.600" fill="#1b2f5e"/>
<rect x="70.700" y="121.300" width="1.500" height="6.200" rx=".5" fill="#d7b77c"/>
<!-- flow line + checklist -->
<g fill="none" stroke="#1f5ba8" stroke-width="1.500" stroke-linecap="round">
<path d="M107.500 89.500v-27a7.300 7.300 0 0 1 7.300-7.300h9"/>
<path d="M146.500 55.200h9.500M196.800 55.200h4M229.500 55.200h9.500a7.200 7.200 0 0 1 7.200 7.200v5.500"/>
</g>
<path d="M155.300 51.600l5.200 3.600-5.200 3.600zM200.300 51.600l5.200 3.600-5.200 3.600zM242.400 67.400h7.600l-3.800 5.300z" fill="#1f5ba8"/>
<rect x="124.900" y="49.100" width="20.500" height="17.200" rx="1.200" fill="#eff5fc" stroke="#3f82d8" stroke-width="2.100"/>
<path d="M129 54.300l1.400 1.500 2.500-3" fill="none" stroke="#4ea349" stroke-width="1.300"/>
<path d="M129 60.500l1.400 1.500 2.500-3" fill="none" stroke="#1f5ba8" stroke-width="1.300"/>
<path d="M135 54.600h7.500M135 60.800h7.500" stroke="#3f82d8" stroke-width="1.300"/>
<!-- clock + gear -->
<circle cx="177" cy="52.800" r="12.600" fill="#edf4fc" stroke="#3b7fd6" stroke-width="3.100"/>
<g stroke="#9db7d8" stroke-width=".8"><path d="M177 43v1.600M177 61v1.600M167.200 52.800h1.600M185.200 52.800h1.600M170.100 45.900l1.100 1.100M183.900 45.900l-1.100 1.100M170.100 59.700l1.100-1.100"/></g>
<path d="M177 45.300v8" stroke="#1f5ba8" stroke-width="2.300" stroke-linecap="round"/>
<circle cx="177" cy="54" r="1.900" fill="#1f5ba8"/>
<g transform="translate(188 59.500)">
<circle r="9" fill="#deeaf6"/>
<g fill="#1f5ba8"><circle r="6"/>
<g><rect x="-1.700" y="-8" width="3.400" height="16" rx=".6"/><rect x="-1.700" y="-8" width="3.400" height="16" rx=".6" transform="rotate(45)"/><rect x="-1.700" y="-8" width="3.400" height="16" rx=".6" transform="rotate(90)"/><rect x="-1.700" y="-8" width="3.400" height="16" rx=".6" transform="rotate(135)"/></g></g>
<circle r="3" fill="#eaf2fb"/></g>
<!-- envelope -->
<rect x="208.800" y="48.100" width="20.400" height="14.600" rx="1.200" fill="#f39a2d"/>
<path d="M209.200 48.800l9.800 7.600 9.800-7.600" fill="none" stroke="#f8bd73" stroke-width="1.100"/>
<path d="M209.200 62.300l7.300-6.800M228.800 62.300l-7.300-6.800" stroke="#f6ae55" stroke-width=".8"/>
<!-- chart board -->
<rect x="201.300" y="79.100" width="68.700" height="43.200" fill="#c9dcf4"/>
<rect x="201.300" y="79.100" width="68.700" height="2.300" fill="#86afe5"/>
<rect x="206.400" y="87.700" width="27.200" height="9.900" rx="1.300" fill="#f6f9fd"/>
<circle cx="211.600" cy="92.500" r="2" fill="#3f82d8"/>
<path d="M216.300 92.500h14" stroke="#bcd3ee" stroke-width="1.200"/>
<g fill="#2f74c9"><rect x="209" y="111.300" width="6.800" height="5.800"/><rect x="219.600" y="110.200" width="7.400" height="6.900"/><rect x="231.100" y="106.400" width="7.700" height="10.700"/><rect x="243.200" y="101.100" width="7.600" height="16"/></g>
<rect x="255" y="95.100" width="6.800" height="22" fill="#f39a2d"/>
<path d="M207 117.400h57" stroke="#1f5ba8" stroke-width="1"/>
<path d="M210.300 106.900c18-2.500 34-8.500 45.500-18" fill="none" stroke="#1f5ba8" stroke-width="1.600"/>
<path d="M258.800 86.300l-6.300.6 3.900 4.600z" fill="#1f5ba8"/>
<!-- plant -->
<g fill="#2a8a7c">
<ellipse cx="111.800" cy="102.500" rx="5.600" ry="9.600" transform="rotate(-14 111.800 102.500)"/>
<ellipse cx="126" cy="107.500" rx="5.400" ry="9.200" transform="rotate(38 126 107.500)"/>
<ellipse cx="105.800" cy="116.200" rx="4.800" ry="8.600" transform="rotate(-58 105.800 116.200)"/>
<ellipse cx="129.600" cy="122" rx="4.400" ry="8.400" transform="rotate(62 129.600 122)"/>
</g>
<g fill="none" stroke="#2a8a7c" stroke-width="1.300"><path d="M113.500 110l4 21M122 114l-3.500 17M109.500 119l8 12M126 124l-7 7"/></g><g fill="none" stroke="#8fd0c2" stroke-width=".8"><path d="M110.300 94.500l3.400 17M130.500 101l-8.500 13.500M99.800 112.300l10.500 7M136.500 118.300l-11 6"/></g>
<path d="M108.500 130.800h20.700v5.100h-1l-.9 13.100h-16.900l-.9-13.100h-1z" fill="#1f5ba8"/>
<path d="M109.500 135.900h18.700" stroke="#174a8f" stroke-width=".7"/>
<!-- robot -->
<path d="M150.300 121c1.200-4 4.200-6.500 8.700-7.700 4-1 8.800-1.300 14.300-1.300s10.300.3 14.300 1.300c4.500 1.200 7.500 3.700 8.700 7.700l-3 19h-40z" fill="#1a4b95"/>
<path d="M152.300 118.600c2.700-2.200 6.300-2.400 8.400-.6l-4.800 21.500-10.800-2.700c.8-7.200 3.300-13.700 7.200-18.200z" fill="#fbfdff"/>
<path d="M194.300 118.600c-2.700-2.200-6.300-2.400-8.400-.6l4.800 21.500 10.800-2.700c-.8-7.200-3.300-13.700-7.200-18.200z" fill="#fbfdff"/>
<path d="M163.200 115.300c3-.9 6.300-1.300 10.100-1.300s7.100.4 10.100 1.300l3.300 25.200h-26.800z" fill="#fbfdff"/>
<rect x="169" y="110" width="8.600" height="4.600" rx="2" fill="#163a7a"/>
<rect x="157.300" y="96" width="4.400" height="8.800" rx="1.800" fill="#2f74c9"/><rect x="184.900" y="96" width="4.400" height="8.800" rx="1.800" fill="#2f74c9"/>
<rect x="160.200" y="88.800" width="26" height="22.400" rx="10.500" fill="#fbfdff"/>
<rect x="162.600" y="95.200" width="21.400" height="9.600" rx="4.600" fill="#163a7a"/>
<ellipse cx="168.700" cy="100.200" rx="1.600" ry="2.200" fill="#8cc3f5"/><ellipse cx="178.100" cy="100.200" rx="1.600" ry="2.200" fill="#8cc3f5"/>
<path d="M171.600 106.900c1 .9 2.400.9 3.400 0" fill="none" stroke="#5a6f8f" stroke-width=".6"/>
<rect x="167.300" y="120.400" width="12.500" height="7.800" rx=".8" fill="#2f74c9"/>
<text x="173.550" y="127" font-family="Liberation Sans, sans-serif" font-weight="700" font-size="6.800" fill="#fff" text-anchor="middle">AI</text>
<!-- desk -->
<rect x="132.200" y="155" width="4.700" height="8" fill="#1f5ba8"/><rect x="209.600" y="155" width="4.700" height="8" fill="#1f5ba8"/>
<rect x="140.100" y="155" width="66.100" height="8.400" fill="#1f5ba8"/>
<rect x="140.100" y="155" width="1.800" height="12.800" fill="#1f5ba8"/><rect x="204.400" y="155" width="1.800" height="12.800" fill="#1f5ba8"/>
<rect x="127" y="144.300" width="92" height="11.200" rx="1" fill="#f3d09c"/>
<rect x="127" y="152.500" width="92" height="3" rx="1" fill="#e9bf85"/>
<ellipse cx="148.300" cy="140.200" rx="6.500" ry="6" fill="#fbfdff" stroke="#1a4b95" stroke-width="1.500"/>
<ellipse cx="199" cy="140.200" rx="6.500" ry="6" fill="#fbfdff" stroke="#1a4b95" stroke-width="1.500"/>
<!-- laptop -->
<path d="M155.300 129.300h36.300l-2.200 17.200h-31.900z" fill="#8fb3e2"/>
<rect x="156.800" y="146.200" width="33.400" height="1.900" rx=".6" fill="#2f66b3"/>
<g transform="translate(173.900 138.800)" fill="#fbfdff"><circle r="3.800"/><rect x="-1.100" y="-5.200" width="2.200" height="10.400" rx=".4"/><rect x="-1.100" y="-5.200" width="2.200" height="10.400" rx=".4" transform="rotate(45)"/><rect x="-1.100" y="-5.200" width="2.200" height="10.400" rx=".4" transform="rotate(90)"/><rect x="-1.100" y="-5.200" width="2.200" height="10.400" rx=".4" transform="rotate(135)"/><circle r="1.900" fill="#8fb3e2"/></g>
<!-- chair, woman -->
<rect x="307.300" y="123.900" width="11" height="26" rx="3.300" fill="#114a93"/>
<path d="M273.700 148.500c.4-9.500 3-19 7.300-24.300 2.300-2.300 5.800-3.200 10-3.500l4.500 1.300 4.500-1.300c4.200.3 7 1.200 9 3.500 4.300 5.300 7 14.800 7.600 24.300z" fill="#1d5cac"/>
<path d="M283.200 106.500c0-5.800 4.500-9.500 10.300-9.300 6 .2 10 4 10.300 9.300.1 2.500 1.700 3.500 2.600 5.600 1.300 3.200-.6 7.300-4.400 7.700-2.600.2-4.800-.4-6.300-1.700h-5.800c-1.600 1.300-3.500 1.800-5.300 1.200-2.100-.8-2.600-3.200-1.800-5.400.6-2 .4-4.700.4-7.400z" fill="#d95f38"/>
<path d="M289.400 115.500h6.800l.8 5.700c-2.400 2.600-6 2.600-8.400 0z" fill="#f0b089"/>
<path d="M284.500 108.500c.1-4.200 2.800-7.200 6.200-7.500 1.600 3 4.700 5.200 8.300 6 .9.100 1.600.9 1.600 2 0 1.200-.8 2.100-1.900 2.100-.9 3.300-3.600 5.500-7 5.500-4.200 0-7.300-3.500-7.200-8.100z" fill="#f6c19c"/>
<path d="M287.300 112.200c1.100.7 2.500.6 3.500-.2-.4 1.700-2.700 2-3.500.2z" fill="#c0342b"/>
<ellipse cx="286.800" cy="107.900" rx=".55" ry=".8" fill="#4a3a34"/><ellipse cx="291.700" cy="108" rx=".55" ry=".8" fill="#4a3a34"/>
<rect x="281.600" y="127.800" width="8.600" height="10.200" rx="1.300" fill="#fbfdff"/>
<path d="M290 130.200h1.900v5.200h-1.900" fill="none" stroke="#fbfdff" stroke-width="1.300"/>
<path d="M291.600 129.400c2.300-1.400 5.300-.6 7.300 1.800l4 6.500-2.600 3.200c-3.300-.9-7-2.800-8.700-5.800z" fill="#f6c19c"/>
<!-- monitor -->
<path d="M233.500 121.500h36.700l3 22.800h-35.200z" fill="#14315f"/>
<rect x="249.500" y="132.500" width="7.900" height="15" rx="3" fill="#223f75"/>
<rect x="244.800" y="146.700" width="48" height="2.400" rx="1" fill="#14315f"/>
<path d="M262 146.900c1.800-2.300 5.300-3 7.800-1.800l-.8 2z" fill="#f6c19c"/>
<rect x="227" y="149" width="100.300" height="4" fill="#2b66b5"/>
<!-- bubbles -->
<circle cx="291.600" cy="78.800" r="10.600" fill="#5aa552"/><path d="M289.200 88.600h4.800l-2.400 3z" fill="#5aa552"/>
<path d="M286.300 79l3.700 3.700 6.800-7.400" fill="none" stroke="#fff" stroke-width="2.300"/>
<path d="M316.800 81.100a10.600 10.600 0 1 1-3.400 20.600l-3 3 .3-4.600a10.600 10.600 0 0 1 6.100-19z" fill="#d9553a"/>
<path d="M316.800 85v8" stroke="#fff" stroke-width="2.600" stroke-linecap="round"/><circle cx="316.800" cy="97.300" r="1.600" fill="#fff"/>
<!-- bottom row -->
<rect x="86.200" y="162" width="23.900" height="23.300" fill="#fbfdff"/>
<path d="M97.300 167h9.600M97.300 171.600h9.600M97.300 176.100h9.600M97.300 180.100h9.600" stroke="#a6c6ec" stroke-width="1.500"/>
<g transform="translate(81.600 170.300) scale(1 .93)" fill="#1c5aa6"><circle r="10.800"/><rect x="-2.900" y="-14.400" width="5.800" height="28.800" rx="1"/><rect x="-2.900" y="-14.400" width="5.800" height="28.800" rx="1" transform="rotate(45)"/><rect x="-2.900" y="-14.400" width="5.800" height="28.800" rx="1" transform="rotate(90)"/><rect x="-2.900" y="-14.400" width="5.800" height="28.800" rx="1" transform="rotate(135)"/><circle r="5.400" fill="#b8d4f0"/></g>
<circle cx="117.500" cy="176.800" r="9.500" fill="#5aa552"/>
<path d="M112.600 177l3.400 3.400 6.200-6.800" fill="none" stroke="#fff" stroke-width="2.200"/>
<path d="M131.400 173.300h98" stroke="#1f5ba8" stroke-width="1.800"/>
<path d="M228.400 168.600l6.200 4.700-6.200 4.700z" fill="#1f5ba8"/>
<path d="M270.700 160.300l13 22.300h-26z" fill="#d9553a" stroke="#d9553a" stroke-width="2.200" stroke-linejoin="round"/>
<path d="M270.700 167v8.500" stroke="#fff" stroke-width="2.600" stroke-linecap="round"/><circle cx="270.700" cy="179.600" r="1.500" fill="#fff"/>
<circle cx="251.900" cy="172.600" r="10.300" fill="#dbe6f5" stroke="#d9553a" stroke-width="3"/>
<path d="M244.600 165.300l14.600 14.600" stroke="#d9553a" stroke-width="3"/>
</svg>

<div class="mj fit sm" style="left:464.30px;top:61.95px;font-size:14.00px;line-height:16.80px;font-weight:700;">残業削減<span class="kn" style="margin-right:-0.220em">の</span>目的</div>
<div class="mj fit sm" style="left:464.30px;top:86.95px;font-size:14.00px;line-height:16.80px;font-weight:400;transform:scaleX(0.9919);transform-origin:0 0;">社内<span class="kn" style="margin-right:-0.220em">の</span>定型業務<span class="kn" style="margin-right:-0.220em">を</span>自動化<span class="kn" style="margin-right:-0.220em">し</span><span class="kn" style="transform:scaleX(0.620);margin-right:-0.380em">、</span>年間<span class="la">1,000</span>時間<span class="kn" style="margin-right:-0.220em">の</span>残業削減<span class="kn" style="margin-right:-0.220em">を</span>目指<span class="kn" style="margin-right:-0.660em">します</span><span class="kn" style="transform:scaleX(0.620);margin-right:-0.380em">。</span></div>
<div class="mj fit sm" style="left:464.30px;top:131.55px;font-size:14.00px;line-height:16.80px;font-weight:700;transform:scaleX(1.0049);transform-origin:0 0;"><span class="kn" style="margin-right:-0.440em">ミス</span>防止<span class="kn" style="margin-right:-0.220em">の</span>推進</div>
<div class="mj fit sm" style="left:464.30px;top:156.55px;font-size:14.00px;line-height:16.80px;font-weight:400;transform:scaleX(0.9817);transform-origin:0 0;">転記<span class="kn" style="margin-right:-0.220em">や</span>集計<span class="kn" style="transform:scaleX(0.620);margin-right:-0.380em">、</span>報告<span class="kn" style="margin-right:-0.660em">などの</span>手作業<span class="kn" style="margin-right:-1.100em">プロセスの</span>自動化<span class="kn" style="margin-right:-0.880em">でミスを</span>減<span class="kn" style="margin-right:-0.880em">らします</span><span class="kn" style="transform:scaleX(0.620);margin-right:-0.380em">。</span></div>
<div class="mj fit sm" style="left:464.30px;top:200.55px;font-size:14.00px;line-height:16.80px;font-weight:700;transform:scaleX(1.0251);transform-origin:0 0;">現状<span class="kn" style="margin-right:-0.220em">の</span>課題</div>
<div class="mj fit sm" style="left:464.30px;top:225.35px;font-size:14.00px;line-height:16.80px;font-weight:400;transform:scaleX(0.9792);transform-origin:0 0;"><span class="la">Excel</span><span class="kn" style="margin-right:-2.420em">やメールによるアナログ</span>作業<span class="kn" style="margin-right:-0.220em">が</span>多<span class="kn" style="margin-right:-0.220em">く</span><span class="kn" style="transform:scaleX(0.620);margin-right:-0.380em">、</span>担当者<span class="kn" style="margin-right:-0.220em">の</span>負担<span class="kn" style="margin-right:-0.220em">と</span>属人化<span class="kn" style="margin-right:-0.220em">が</span>問題<span class="kn" style="margin-right:-0.440em">です</span><span class="kn" style="transform:scaleX(0.620);margin-right:-0.380em">。</span></div>
<div class="mj fit sm" style="left:464.30px;top:270.55px;font-size:14.00px;line-height:16.80px;font-weight:700;">新技術<span class="kn" style="margin-right:-0.220em">の</span>活用</div>
<div class="mj fit sm" style="left:464.30px;top:295.15px;font-size:14.00px;line-height:16.80px;font-weight:400;transform:scaleX(0.9932);transform-origin:0 0;">生成<span class="la">AI</span><span class="kn" style="margin-right:-2.200em">やノーコードツールで</span>柔軟<span class="kn" style="margin-right:-0.440em">かつ</span>拡張性<span class="kn" style="margin-right:-0.220em">の</span>高<span class="kn" style="margin-right:-0.220em">い</span>自動化基盤<span class="kn" style="margin-right:-0.220em">を</span>構築<span class="kn" style="margin-right:-0.660em">します</span><span class="kn" style="transform:scaleX(0.620);margin-right:-0.380em">。</span></div>
<div class="ftr"></div>
<div class="mj fit sm" style="left:55.20px;top:499.25px;font-size:8.50px;line-height:10.20px;font-weight:400;transform:scaleX(1.1301);transform-origin:0 0;color:#3a3a3a;"><span class="kn" style="margin-right:-0.880em">フッター</span></div></div></div>
</body></html>
